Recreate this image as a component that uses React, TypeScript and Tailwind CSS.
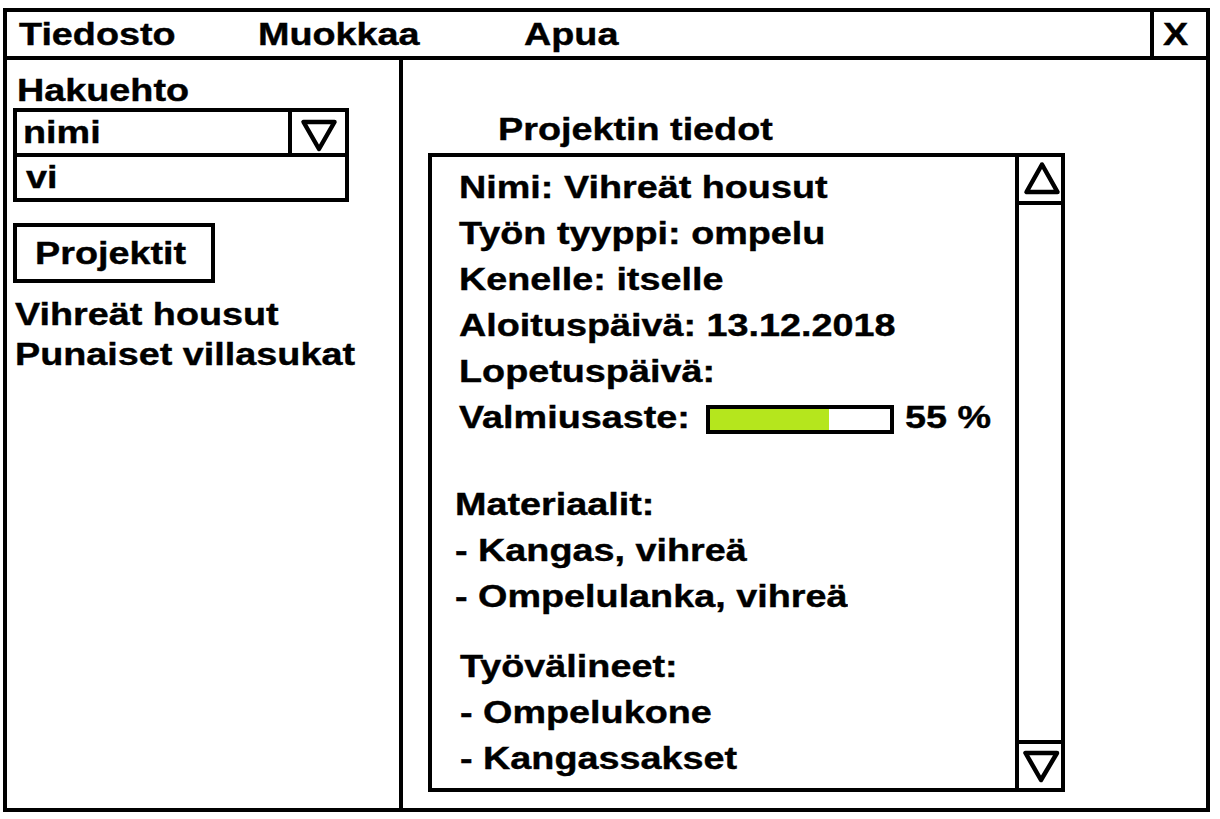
import React from "react";

const T = "inline-block origin-left scale-x-[1.18] whitespace-nowrap [-webkit-text-stroke:0.4px_black]";

function Line({ children, className = "" }: { children: React.ReactNode; className?: string }) {
  return (
    <div className={"h-[46px] leading-[46px] " + className}>
      <span className={T}>{children}</span>
    </div>
  );
}

export default function App() {
  return (
    <div className="w-[1220px] h-[819px] bg-white overflow-hidden font-['Liberation_Sans',Arial,sans-serif] font-bold text-[32px] text-black">
      <div className="ml-[3px] mt-[8px] w-[1207px] h-[804px] border-4 border-black flex flex-col">
        {/* menu bar */}
        <div className="flex h-[48px] border-b-4 border-black leading-[44px]">
          <div className="flex flex-1 pl-[12px]">
            <div className="w-[239px]"><span className={T}>Tiedosto</span></div>
            <div className="w-[266px]"><span className={T}>Muokkaa</span></div>
            <div><span className={T}>Apua</span></div>
          </div>
          <div className="w-[56px] border-l-4 border-black pl-[9px]">
            <span className={T}>X</span>
          </div>
        </div>
        {/* body */}
        <div className="flex flex-1">
          {/* left panel */}
          <div className="w-[396px] border-r-4 border-black pt-[12px]">
            <div className="ml-[10px] leading-[36px] h-[36px]">
              <span className={T}>Hakuehto</span>
            </div>
            <div className="ml-[6px] w-[336px] border-4 border-black">
              <div className="flex h-[45px] border-b-4 border-black">
                <div className="flex-1 pl-[6px] leading-[41px]">
                  <span className={T}>nimi</span>
                </div>
                <div className="w-[57px] border-l-4 border-black">
                  <svg width="52" height="41" viewBox="0 0 52 41">
                    <polygon points="11.5,10 42.5,10 27,37" fill="none" stroke="black" strokeWidth="4.5" strokeLinejoin="round" />
                  </svg>
                </div>
              </div>
              <div className="h-[41px] pl-[9px] leading-[41px]">
                <span className={T}>vi</span>
              </div>
            </div>
            <div className="mt-[21px] ml-[6px] w-[202px] h-[60px] border-4 border-black pl-[18px] leading-[52px]">
              <span className={T}>Projektit</span>
            </div>
            <div className="mt-[11px] ml-[8px] leading-[40px]">
              <div className="h-[40px]"><span className={T}>Vihreät housut</span></div>
              <div className="h-[40px]"><span className={T}>Punaiset villasukat</span></div>
            </div>
          </div>
          {/* right panel */}
          <div className="flex-1 flex flex-col">
            <div className="mt-[51px] ml-[95px] h-[36px] leading-[36px]">
              <span className={T}>Projektin tiedot</span>
            </div>
            <div className="mt-[6px] ml-[25px] w-[637px] h-[639px] border-4 border-black flex">
              <div className="flex-1 pt-[7px] pl-[27px]">
                <Line>Nimi: Vihreät housut</Line>
                <Line>Työn tyyppi: ompelu</Line>
                <Line>Kenelle: itselle</Line>
                <Line>Aloituspäivä: 13.12.2018</Line>
                <Line>Lopetuspäivä:</Line>
                <div className="flex h-[46px] leading-[46px]">
                  <div className="w-[247px]"><span className={T}>Valmiusaste:</span></div>
                  <div className="mt-[11px] w-[188px] h-[29px] border-4 border-black">
                    <div className="w-[119px] h-full bg-[#b5e61d]" />
                  </div>
                  <div className="ml-[11px]"><span className={T}>55 %</span></div>
                </div>
                <div className="mt-[41px] -ml-[4px]">
                  <Line>Materiaalit:</Line>
                  <Line>- Kangas, vihreä</Line>
                  <Line>- Ompelulanka, vihreä</Line>
                </div>
                <div className="mt-[24px] ml-[1px]">
                  <Line>Työvälineet:</Line>
                  <Line>- Ompelukone</Line>
                  <Line>- Kangassakset</Line>
                </div>
              </div>
              <div className="w-[46px] border-l-4 border-black flex flex-col justify-between">
                <div className="h-[48px] border-b-4 border-black">
                  <svg width="42" height="44" viewBox="0 0 42 44">
                    <polygon points="7.5,35 38.5,35 23,7.5" fill="none" stroke="black" strokeWidth="4.5" strokeLinejoin="round" />
                  </svg>
                </div>
                <div className="h-[48px] border-t-4 border-black">
                  <svg width="42" height="44" viewBox="0 0 42 44">
                    <polygon points="6.5,9 38,9 22,36" fill="none" stroke="black" strokeWidth="4.5" strokeLinejoin="round" />
                  </svg>
                </div>
              </div>
            </div>
          </div>
        </div>
      </div>
    </div>
  );
}
